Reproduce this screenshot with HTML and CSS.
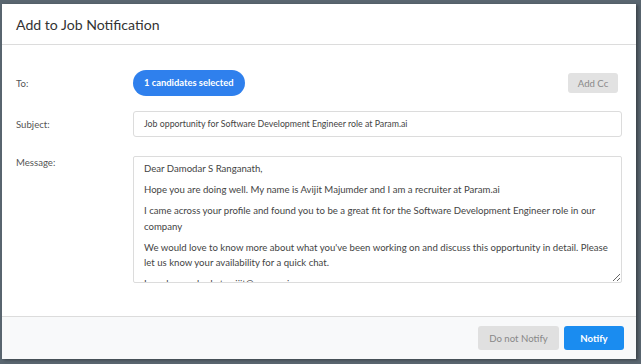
FILE: index.html
```html
<!DOCTYPE html>
<html lang="en">
<head>
    <meta charset="UTF-8">
    <meta name="viewport" content="width=device-width, initial-scale=1.0">
    <title>Add to Job Notification</title>
    <link rel="stylesheet" href="styles.css">
</head>
<body>
    <div class="modal">
        <div class="modal-header">
            <h2>Add to Job Notification</h2>
        </div>

        <div class="modal-body">
            <div class="row row-to">
                <label>To:</label>
                <div class="field to-field">
                    <span class="pill">1 candidates selected</span>
                    <button class="btn-cc">Add Cc</button>
                </div>
            </div>

            <div class="row row-subject">
                <label>Subject:</label>
                <div class="field">
                    <div class="input">Job opportunity for Software Development Engineer role at Param.ai</div>
                </div>
            </div>

            <div class="row row-message">
                <label>Message:</label>
                <div class="field">
                    <div class="textarea">
                        <p>Dear Damodar S Ranganath,</p>
                        <p>Hope you are doing well. My name is Avijit Majumder and I am a recruiter at Param.ai</p>
                        <p>I came across your profile and found you to be a great fit for the Software Development Engineer role in our company</p>
                        <p>We would love to know more about what you've been working on and discuss this opportunity in detail. Please let us know your availability for a quick chat.</p>
                        <p>I can be reached at avijit@param.ai</p>
                        <p>Thanks,<br>Avijit</p>
                    </div>
                </div>
            </div>
        </div>

        <div class="modal-footer">
            <button class="btn btn-muted">Do not Notify</button>
            <button class="btn btn-primary">Notify</button>
        </div>
    </div>
</body>
</html>
```

FILE: styles.css
```css
* {
    margin: 0;
    padding: 0;
    box-sizing: border-box;
}

body {
    font-family: Lato, "Open Sans", sans-serif;
    background: #5a6670;
    width: 641px;
    height: 364px;
    padding: 4px 5px 5px 2px;
    overflow: hidden;
}

.modal {
    background: white;
    height: 355px;
    display: flex;
    flex-direction: column;
    box-shadow: 2px 1px 3px rgba(0, 0, 0, 0.35);
}

.modal-header {
    height: 41px;
    padding: 0 14px;
    display: flex;
    align-items: center;
    border-bottom: 1px solid #dcdcdc;
}

.modal-header h2 {
    font-size: 14.1px;
    font-weight: 400;
    color: #333;
}

.modal-body {
    flex: 1;
    padding: 25px 14px 0 14px;
}

.row {
    display: grid;
    grid-template-columns: 117px 1fr;
    align-items: center;
}

.row-to {
    margin-bottom: 15px;
}

.row-message {
    align-items: start;
    margin-top: 19px;
}

.row label {
    font-size: 9.6px;
    color: #555;
}

.row-message label {
    padding-top: 1px;
}

.to-field {
    display: flex;
    align-items: center;
    justify-content: space-between;
}

.pill {
    display: inline-block;
    height: 26px;
    line-height: 26px;
    padding: 0 11px;
    background: #2f80ed;
    color: white;
    font-size: 9.4px;
    font-weight: 700;
    border-radius: 13px;
}

.btn-cc {
    font-family: inherit;
    font-size: 9.6px;
    color: #8a8a8a;
    background: #e2e2e2;
    border: none;
    border-radius: 3px;
    width: 50px;
    height: 20px;
    margin-right: 4px;
}

.input {
    height: 26px;
    line-height: 24px;
    border: 1px solid #dcdcdc;
    border-radius: 3px;
    padding: 0 10px;
    font-size: 8.8px;
    color: #444;
}

.textarea {
    height: 127px;
    border: 1px solid #dcdcdc;
    border-radius: 2px;
    padding: 4px 10px 0 10px;
    font-size: 9.6px;
    line-height: 15.5px;
    color: #444;
    overflow-y: scroll;
    resize: vertical;
}

.textarea p {
    margin-bottom: 5.5px;
}

.textarea::-webkit-scrollbar {
    width: 7px;
}

.textarea::-webkit-scrollbar-track {
    background: #e8e8e8;
}

.textarea::-webkit-scrollbar-thumb {
    background: #c1c1c1;
    border-radius: 2px;
}

.modal-footer {
    height: 43px;
    background: #f8f9fa;
    border-top: 1px solid #dcdcdc;
    display: flex;
    align-items: center;
    justify-content: flex-end;
    gap: 5px;
    padding: 0 12px 0 0;
}

.btn {
    font-family: inherit;
    font-size: 9.6px;
    height: 24px;
    border: none;
    border-radius: 3px;
}

.btn-muted {
    width: 81px;
    background: #e0e0e0;
    color: #888;
}

.btn-primary {
    width: 60px;
    background: #1a8cf0;
    color: white;
    font-weight: 700;
}
```
